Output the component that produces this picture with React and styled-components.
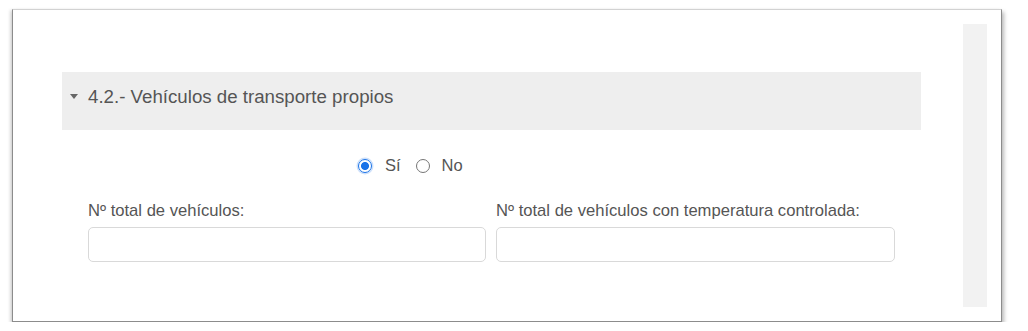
import React from "react";
import styled, { createGlobalStyle } from "styled-components";

const Global = createGlobalStyle`
  html, body { margin: 0; padding: 0; background: #ffffff; }
  body { font-family: "Liberation Sans", Arial, sans-serif; color: #555; }
  * { box-sizing: border-box; }
`;

const Frame = styled.div`
  margin: 9px 0 0 12px;
  width: 990px;
  height: 313px;
  display: flex;
  background: #fff;
  border: 1px solid;
  border-color: #d2d2d2 #8c8c8c #8c8c8c #8c8c8c;
  box-shadow: 2px 3px 4px rgba(0, 0, 0, 0.28), -2px 1px 3px rgba(0, 0, 0, 0.14);
`;

const Main = styled.div`
  flex: 1;
  padding: 62px 0 0 49px;
  display: flex;
  flex-direction: column;
`;

const Header = styled.div`
  width: 859px;
  height: 58px;
  background: #eeeeee;
  display: flex;
  align-items: flex-start;
  padding: 13px 0 0 7.5px;
`;

const Caret = styled.span`
  width: 0;
  height: 0;
  margin-top: 9px;
  margin-right: 10.5px;
  border-left: 4px solid transparent;
  border-right: 4px solid transparent;
  border-top: 5px solid #666;
`;

const Title = styled.span`
  font-size: 18.7px;
  line-height: 23px;
  color: #555;
`;

const RadioRow = styled.div`
  margin-top: 26px;
  padding-left: 296px;
  display: flex;
  align-items: center;
  height: 19px;
`;

const RadioDot = styled.span`
  width: 14px;
  height: 14px;
  border-radius: 50%;
  flex: none;
  border: 1.5px solid ${(p) => (p.$checked ? "#1a73e8" : "#767676")};
  background: ${(p) =>
    p.$checked
      ? "radial-gradient(circle, #1a73e8 0 3.6px, #ffffff 4.4px)"
      : "#ffffff"};
  box-shadow: ${(p) =>
    p.$checked ? "0 0 0 1.5px rgba(26,115,232,0.22)" : "none"};
  margin-right: ${(p) => (p.$checked ? "13px" : "12px")};
`;

const RadioText = styled.span`
  font-size: 16.5px;
  line-height: 19px;
  color: #555;
  margin-right: 15px;
`;

const Fields = styled.div`
  margin-top: 26px;
  padding-left: 26px;
  display: grid;
  grid-template-columns: 398px 399px;
  column-gap: 10px;
`;

const Field = styled.div`
  display: flex;
  flex-direction: column;
`;

const Label = styled.label`
  font-size: 16.6px;
  line-height: 19px;
  color: #555;
  margin-bottom: 7px;
  white-space: nowrap;
`;

const Input = styled.input`
  height: 35px;
  width: 100%;
  border: 1px solid #d9d9d9;
  border-radius: 5px;
  background: #fff;
  outline: none;
  font-family: inherit;
  font-size: 16px;
`;

const ScrollTrack = styled.div`
  width: 24px;
  margin: 14px 14px 14px 0;
  background: #f2f2f2;
  flex: none;
`;

export default function App() {
  return (
    <>
      <Global />
      <Frame>
        <Main>
          <Header>
            <Caret />
            <Title>4.2.- Vehículos de transporte propios</Title>
          </Header>
          <RadioRow>
            <RadioDot $checked />
            <RadioText>Sí</RadioText>
            <RadioDot />
            <RadioText>No</RadioText>
          </RadioRow>
          <Fields>
            <Field>
              <Label>Nº total de vehículos:</Label>
              <Input type="text" />
            </Field>
            <Field>
              <Label>Nº total de vehículos con temperatura controlada:</Label>
              <Input type="text" />
            </Field>
          </Fields>
        </Main>
        <ScrollTrack />
      </Frame>
    </>
  );
}
